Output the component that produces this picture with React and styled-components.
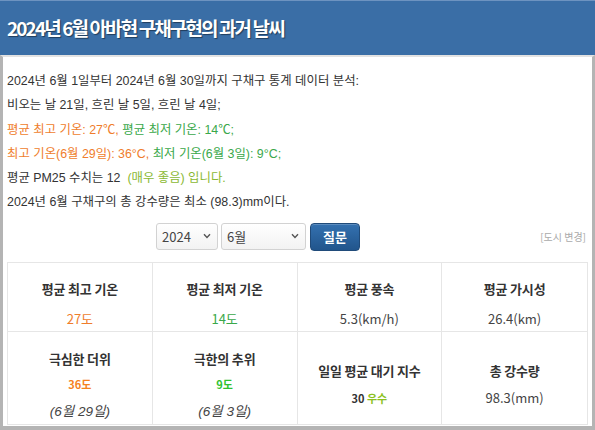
import React from "react";
import styled, { createGlobalStyle } from "styled-components";

const Global = createGlobalStyle`
  html, body { margin: 0; padding: 0; background: #fff; }
  body { font-family: "Liberation Sans", Arial, "Noto Sans CJK KR", sans-serif; color: #333; }
  * { box-sizing: border-box; }
`;

const Page = styled.div`
  width: 595px;
  height: 430px;
  display: flex;
  flex-direction: column;
  overflow: hidden;
`;

const Header = styled.div`
  height: 55px;
  background: #3a6ea6;
  border-top: 1px solid #6d93c0;
  display: flex;
  align-items: center;
  padding: 0 7px;
`;

const Title = styled.h1`
  margin: 0;
  font-family: "Noto Sans CJK KR", sans-serif;
  font-weight: 700;
  font-size: 19px;
  letter-spacing: -1.9px;
  color: #fff;
  text-shadow: 1px 1px 1px rgba(0, 0, 0, 0.45);
  transform: translateY(-1px);
`;

const Body = styled.div`
  flex: 1;
  border-left: 3px solid #b4b4b4;
  border-right: 3px solid #b4b4b4;
  border-bottom: 4px solid #b4b4b4;
  border-top: 2px solid #e2e2e2;
  padding: 12px 4px 0 4px;
  display: flex;
  flex-direction: column;
`;

const Summary = styled.div`
  font-size: 12.4px;
  line-height: 24.3px;
  color: #333;
`;

const Line = styled.div`
  white-space: nowrap;
`;

const C = styled.span`
  color: ${(p) => p.$c};
`;

const Controls = styled.div`
  display: flex;
  align-items: center;
  height: 30px;
  margin-top: 7px;
  padding-left: 149px;
  gap: 3px;
`;

const SelectWrap = styled.div`
  position: relative;
  width: ${(p) => p.$w}px;
  height: 27px;
`;

const Select = styled.select`
  appearance: none;
  -webkit-appearance: none;
  width: 100%;
  height: 100%;
  border: 1px solid #d2d2d2;
  border-radius: 3px;
  background: linear-gradient(#ffffff, #f2f2f2);
  font-family: "Noto Sans CJK KR", sans-serif;
  font-size: 13px;
  color: #444;
  padding: 0 0 0 5px;
`;

const Chevron = styled.svg`
  position: absolute;
  right: 7px;
  top: 10px;
  width: 8px;
  height: 6px;
  pointer-events: none;
`;

const AskButton = styled.button`
  margin-left: 1px;
  width: 50px;
  height: 28px;
  border: 1px solid #204b7a;
  border-radius: 4px;
  background: linear-gradient(#3471b0, #21558c);
  color: #fff;
  font-family: "Noto Sans CJK KR", sans-serif;
  font-weight: 700;
  font-size: 13px;
  box-shadow: inset 0 1px 0 rgba(255, 255, 255, 0.2);
`;

const CityLink = styled.span`
  margin-left: auto;
  margin-right: 2px;
  font-family: "Noto Sans CJK KR", sans-serif;
  font-size: 10px;
  color: #aaa;
`;

const Table = styled.div`
  margin-top: 10px;
  display: grid;
  grid-template-columns: repeat(4, 1fr);
  grid-template-rows: 69px 93px;
  border: 1px solid #e6e6e6;
  border-bottom: none;
`;

const Cell = styled.div`
  border-right: 1px solid #e6e6e6;
  border-bottom: 1px solid #e6e6e6;
  &:nth-child(4n) { border-right: none; }
  display: flex;
  flex-direction: column;
  align-items: center;
  padding-top: ${(p) => p.$pt}px;
`;

const CellTitle = styled.div`
  font-family: "Noto Sans CJK KR", sans-serif;
  font-weight: 700;
  font-size: 13px;
  color: #333;
  line-height: 18px;
  letter-spacing: -0.2px;
`;

const CellValue = styled.div`
  margin-top: ${(p) => p.$mt ?? 13}px;
  font-family: "Noto Sans CJK KR", sans-serif;
  font-size: ${(p) => (p.$small ? 11 : 13)}px;
  font-weight: ${(p) => (p.$small ? 700 : 400)};
  color: ${(p) => p.$c || "#444"};
  line-height: 16px;
`;

const CellDate = styled.div`
  margin-top: 11px;
  font-family: "Liberation Sans", "Noto Sans CJK KR", sans-serif;
  font-style: italic;
  font-size: 13.5px;
  color: #444;
  line-height: 18px;
`;

const Down = () => (
  <Chevron viewBox="0 0 8 6">
    <path d="M1 1.2 L4 4.4 L7 1.2" fill="none" stroke="#555" strokeWidth="1.4" />
  </Chevron>
);

const ORANGE = "#ef7d2c";
const GREEN = "#3aa84a";

export default function App() {
  return (
    <Page>
      <Global />
      <Header>
        <Title>2024년 6월 아바현 구채구현의 과거 날씨</Title>
      </Header>
      <Body>
        <Summary>
          <Line>2024년 6월 1일부터 2024년 6월 30일까지 구채구 통계 데이터 분석:</Line>
          <Line>비오는 날 21일, 흐린 날 5일, 흐린 날 4일;</Line>
          <Line>
            <C $c={ORANGE}>평균 최고 기온: 27℃, </C>
            <C $c={GREEN}>평균 최저 기온: 14℃;</C>
          </Line>
          <Line>
            <C $c={ORANGE}>최고 기온(6월 29일): 36°C, </C>
            <C $c={GREEN}>최저 기온(6월 3일): 9°C;</C>
          </Line>
          <Line>
            평균 PM25 수치는 12 &nbsp;<C $c="#8ab833">(매우 좋음) 입니다.</C>
          </Line>
          <Line>2024년 6월 구채구의 총 강수량은 최소 (98.3)mm이다.</Line>
        </Summary>
        <Controls>
          <SelectWrap $w={62}>
            <Select defaultValue="2024">
              <option>2024</option>
            </Select>
            <Down />
          </SelectWrap>
          <SelectWrap $w={85}>
            <Select defaultValue="6월">
              <option>6월</option>
            </Select>
            <Down />
          </SelectWrap>
          <AskButton>질문</AskButton>
          <CityLink>[도시 변경]</CityLink>
        </Controls>
        <Table>
          <Cell $pt={17}>
            <CellTitle>평균 최고 기온</CellTitle>
            <CellValue $c={ORANGE}>27도</CellValue>
          </Cell>
          <Cell $pt={17}>
            <CellTitle>평균 최저 기온</CellTitle>
            <CellValue $c={GREEN}>14도</CellValue>
          </Cell>
          <Cell $pt={17}>
            <CellTitle>평균 풍속</CellTitle>
            <CellValue>5.3(km/h)</CellValue>
          </Cell>
          <Cell $pt={17}>
            <CellTitle>평균 가시성</CellTitle>
            <CellValue>26.4(km)</CellValue>
          </Cell>
          <Cell $pt={18}>
            <CellTitle>극심한 더위</CellTitle>
            <CellValue $small $mt={8} $c="#f5821f">36도</CellValue>
            <CellDate>(6월 29일)</CellDate>
          </Cell>
          <Cell $pt={18}>
            <CellTitle>극한의 추위</CellTitle>
            <CellValue $small $mt={8} $c="#2fc22f">9도</CellValue>
            <CellDate>(6월 3일)</CellDate>
          </Cell>
          <Cell $pt={30}>
            <CellTitle>일일 평균 대기 지수</CellTitle>
            <CellValue $small $mt={10} $c="#333">
              30 <C $c="#8dc21f">우수</C>
            </CellValue>
          </Cell>
          <Cell $pt={30}>
            <CellTitle>총 강수량</CellTitle>
            <CellValue $mt={10}>98.3(mm)</CellValue>
          </Cell>
        </Table>
      </Body>
    </Page>
  );
}
